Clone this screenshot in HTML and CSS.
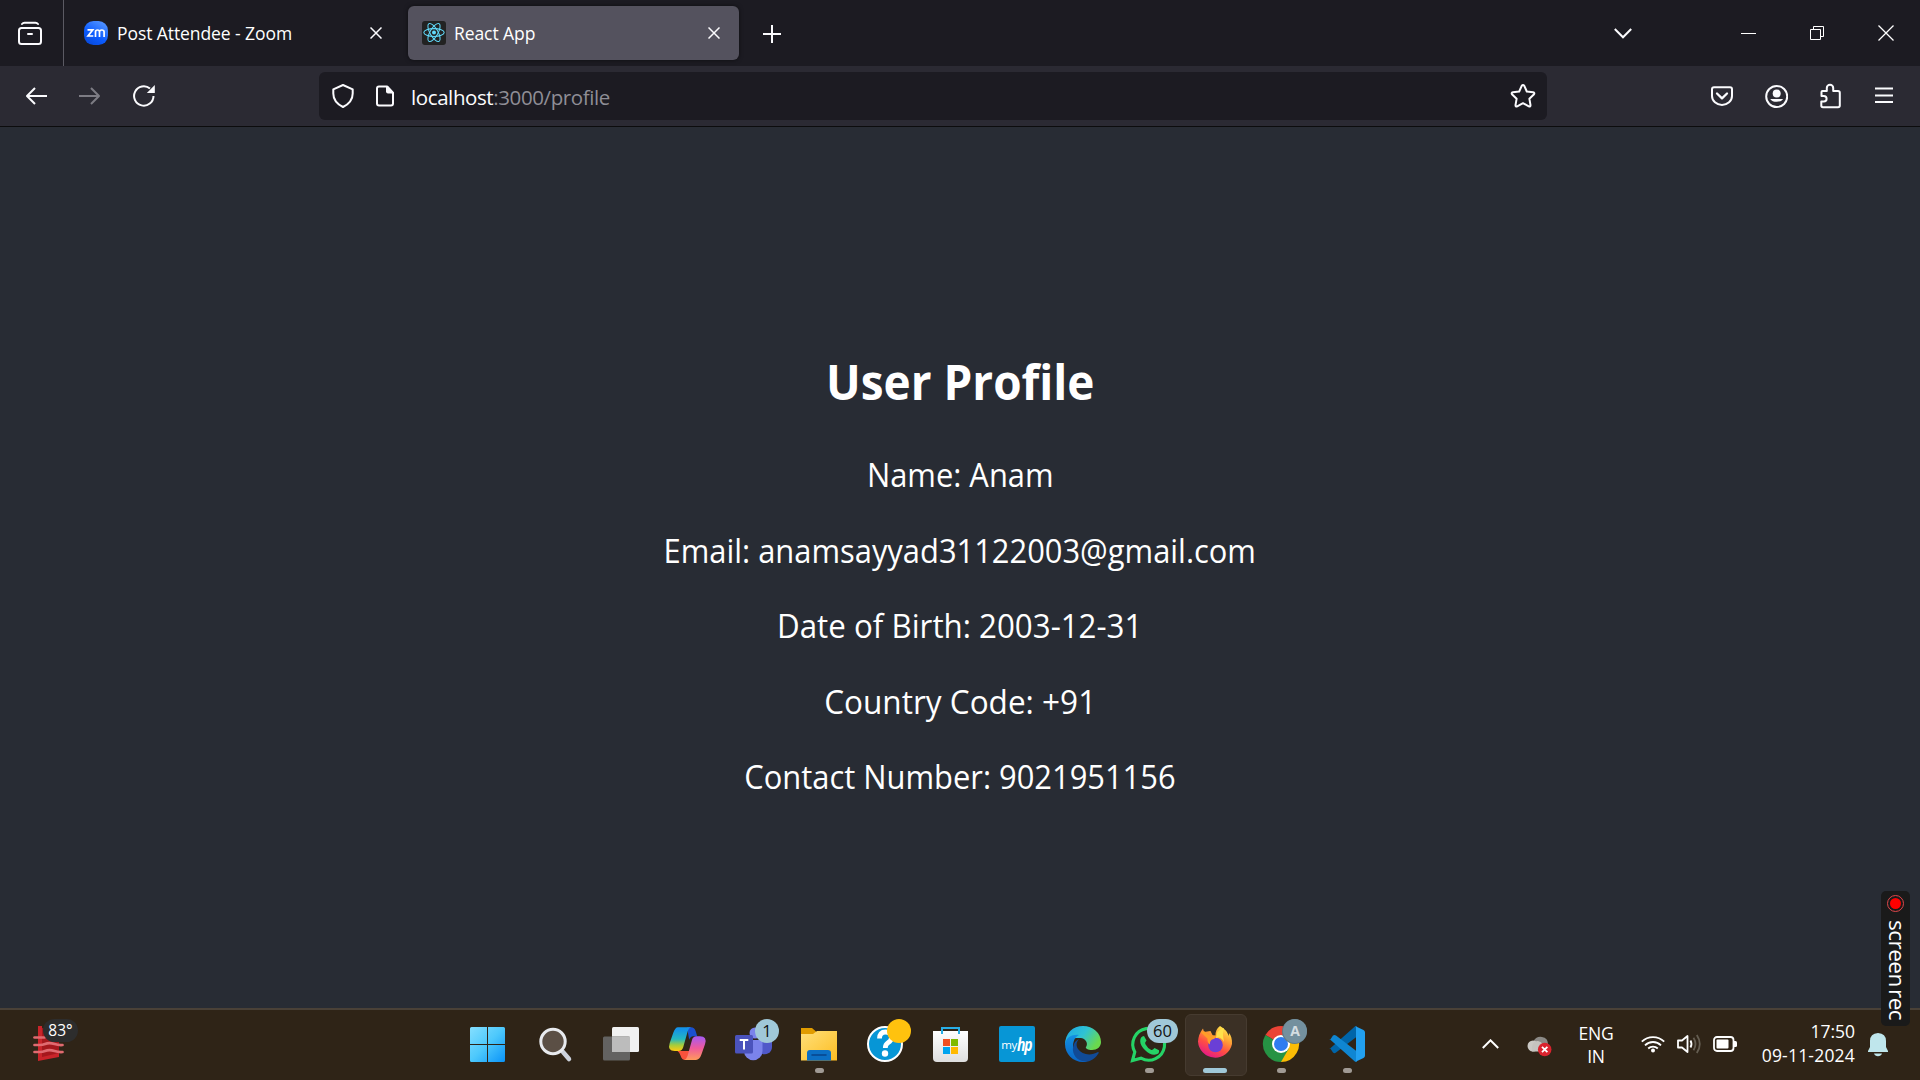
FILE: index.html
```html
<!DOCTYPE html>
<html lang="en">
<head>
<meta charset="utf-8">
<title>React App</title>
<link rel="stylesheet" href="styles.css">
</head>
<body>
<div class="tabbar">
  <svg class="archive" width="63" height="66" viewBox="0 0 63 66" fill="none" stroke="#fbfbfe" stroke-width="2" stroke-linecap="round"><path d="M22 24q1-1.300 2.500-1.300h11q1.500 0 2.500 1.300"/><rect x="19" y="28" width="22" height="16" rx="2.500"/><path d="M28 34h4"/></svg>
  <div class="tab tab-idle">
    <svg width="24" height="24" viewBox="0 0 24 24"><defs><linearGradient id="zm" x1="0" y1="1" x2=".6" y2="0"><stop offset="0" stop-color="#0845d0"/><stop offset=".5" stop-color="#0b5cff"/><stop offset="1" stop-color="#4a8dff"/></linearGradient></defs><rect width="24" height="24" rx="9.500" fill="url(#zm)"/><path d="M3.500 8.800h5.300L4 15h5.300M11.500 16V11q0-2 2-2t2 2v5M15.500 11q0-2 2.300-2t2.300 2v5" fill="none" stroke="#fff" stroke-width="1.700"/></svg>
    <span class="label label-zoom">Post Attendee - Zoom</span>
    <svg class="close" width="12" height="12" viewBox="0 0 12 12"><path d="M.5.5l11 11M11.500.5l-11 11" stroke="#fbfbfe" stroke-width="1.500"/></svg>
  </div>
  <div class="tab tab-active">
    <svg width="24" height="24" viewBox="0 0 24 24" fill="none" stroke="#61dafb" stroke-width="1.050"><rect width="24" height="24" rx="3" fill="#222" stroke="none"/><ellipse cx="12" cy="11.500" rx="10.200" ry="3.900"/><ellipse cx="12" cy="11.500" rx="10.200" ry="3.900" transform="rotate(60 12 11.500)"/><ellipse cx="12" cy="11.500" rx="10.200" ry="3.900" transform="rotate(120 12 11.500)"/><circle cx="12" cy="11.500" r="2" fill="#61dafb" stroke="none"/></svg>
    <span class="label label-react">React App</span>
    <svg class="close" width="12" height="12" viewBox="0 0 12 12"><path d="M.5.5l11 11M11.500.5l-11 11" stroke="#fbfbfe" stroke-width="1.500"/></svg>
  </div>
  <svg class="newtab" width="18" height="18" viewBox="0 0 18 18"><path d="M0 9h18M9 0v18" stroke="#fbfbfe" stroke-width="2"/></svg>
  <div class="window-controls">
    <svg width="18" height="11" viewBox="0 0 18 11"><path d="M.8 1L9 9.300 17.200 1" fill="none" stroke="#fbfbfe" stroke-width="2"/></svg>
    <svg class="min" width="15" height="3" viewBox="0 0 15 3"><path d="M0 1h15v1H0z" fill="#fff"/></svg>
    <svg class="restore" width="14" height="14" viewBox="0 0 14 14" fill="none" stroke="#fff"><path d="M.5 3.500h10v10H.5zM3.500 3V.5h10v10H11"/></svg>
    <svg width="16" height="16" viewBox="0 0 16 16"><path d="M.5.500l15 15M15.500.500l-15 15" stroke="#fff" stroke-width="1.300"/></svg>
  </div>
</div>

<div class="toolbar">
  <div class="nav">
    <svg width="22" height="22" viewBox="0 0 22 22" fill="none" stroke="#fbfbfe" stroke-width="2"><path d="M22 11H2M10 3L2 11l8 8" stroke-linejoin="round"/></svg>
    <svg width="22" height="22" viewBox="0 0 22 22" fill="none" stroke="#7d7c84" stroke-width="2"><path d="M0 11h20M12 3l8 8-8 8" stroke-linejoin="round"/></svg>
    <svg class="reload" width="24" height="24" viewBox="0 0 24 24" fill="none" stroke="#fbfbfe" stroke-width="2"><path d="M21.500 12A9.700 9.700 0 1 1 18 4.500"/><path d="M22.800 1v8h-8z" fill="#fbfbfe" stroke="none"/></svg>
  </div>
  <div class="urlbar">
    <svg width="24" height="26" viewBox="0 0 24 26" fill="none" stroke="#fbfbfe" stroke-width="2" stroke-linejoin="round"><path d="M12 2l9.700 4.300v4.200c0 6-3.700 10.500-9.700 13.500-6-3-9.700-7.500-9.700-13.500V6.300z"/></svg>
    <svg class="doc" width="20" height="24" viewBox="0 0 20 24"><path d="M4 2.500h8L18 9v10.500q0 2-2 2H4q-2 0-2-2v-15q0-2 2-2z" fill="none" stroke="#fbfbfe" stroke-width="2"/><path d="M11 2h2l5.500 6v1.500H13q-2 0-2-2z" fill="#fbfbfe"/></svg>
    <span class="url"><b>localhost</b>:3000/profile</span>
    <svg class="star" width="26" height="26" viewBox="0 0 26 26" fill="none" stroke="#fbfbfe" stroke-width="2" stroke-linejoin="round"><path d="M11.700 2.800q1.300-1.800 2.600 0l2.500 5.700 6.300.8q2 .6.700 2.200l-4.400 4.300 1.100 6.400q0 1.700-1.700 1.100L13 20.200l-5.800 3.100q-1.700.6-1.700-1.100l1.100-6.400-4.400-4.300q-1.300-1.600.7-2.200l6.300-.8z"/></svg>
  </div>
  <div class="actions">
    <svg width="24" height="24" viewBox="0 0 24 24" fill="none" stroke="#fbfbfe" stroke-width="2" stroke-linejoin="round"><path d="M4 3.300h16q2 0 2 2V12a10 9 0 0 1-20 0V5.300q0-2 2-2z"/><path d="M7 9.500l5 4.800 5-4.800" stroke-width="2.300" stroke-linecap="round"/></svg>
    <svg width="24" height="24" viewBox="0 0 24 24"><circle cx="12.700" cy="12.500" r="10.500" fill="none" stroke="#fbfbfe" stroke-width="2"/><circle cx="12.700" cy="9.500" r="4" fill="#fbfbfe"/><path d="M6.200 15h13a7.200 5 0 0 1-13 0z" fill="#fbfbfe"/></svg>
    <svg width="24" height="26" viewBox="0 0 24 26" fill="none" stroke="#fbfbfe" stroke-width="2" stroke-linejoin="round"><path d="M3.500 13V9q0-1 1-1h4.300V5a3.200 3.200 0 0 1 6.400 0v3H20q1.800 0 1.800 1.800v12.700q0 1.800-1.800 1.800H5q-1.700 0-1.700-1.700v-4h2.500a2.800 2.800 0 0 0 0-5.600z"/></svg>
    <svg width="24" height="24" viewBox="0 0 24 24"><path d="M3 4.500h18M3 11.500h18M3 18h18" stroke="#fbfbfe" stroke-width="2"/></svg>
  </div>
</div>

<main class="page">
  <h2 class="title">User Profile</h2>
  <p class="line l-name">Name: Anam</p>
  <p class="line l-email">Email: anamsayyad31122003@gmail.com</p>
  <p class="line l-dob">Date of Birth: 2003-12-31</p>
  <p class="line l-country">Country Code: +91</p>
  <p class="line l-contact">Contact Number: 9021951156</p>
</main>

<footer class="taskbar">
  <div class="weather">
    <svg width="32" height="37" viewBox="0 0 32 37"><path d="M6 2l20 6v23L6 35z" fill="#a5181d"/><path d="M5 1h4v31l17-4v4L5 36z" fill="#c9242a"/><g fill="none" stroke="#e06a70" stroke-width="2.700" stroke-linecap="round"><path d="M1.500 12.500h10"/><path d="M1.500 20h5c6 0 5-1.800 10-1.800s6 2.300 13 1.800"/><path d="M1.500 27h5c6 0 5-1.800 10-1.800s6 2.300 13 1.800"/></g></svg>
    <span class="temp">83°</span>
  </div>
  <div class="apps">
    <div class="app"><svg width="66" height="70" viewBox="0 0 66 70"><defs><linearGradient id="win" x1="0" y1="0" x2="1" y2="1"><stop offset="0" stop-color="#85dfff"/><stop offset=".5" stop-color="#4cc8fc"/><stop offset="1" stop-color="#0a93f8"/></linearGradient></defs><path d="M17.500 17h15.500v17H16V18.500Q16 17 17.500 17zM34 17h15.500q1.500 0 1.500 1.500V34H34zM16 35h17v17H17.500Q16 52 16 50.500zM34 35h17v15.500q0 1.500-1.500 1.500H34z" fill="url(#win)"/></svg></div>
    <div class="app"><svg width="66" height="70" viewBox="0 0 66 70"><path d="M43 42l6 7" stroke="#ccd2dc" stroke-width="4.500" stroke-linecap="round"/><circle cx="33" cy="31.500" r="12.200" fill="#5b4f45" stroke="#e8eaee" stroke-width="3"/></svg></div>
    <div class="app"><svg width="66" height="70" viewBox="0 0 66 70"><rect x="26" y="17" width="27" height="25" rx="1.500" fill="#f1f1f1"/><rect x="17" y="26.500" width="27" height="24" rx="1.500" fill="#636261"/><path d="M26 26.500h18V42H26z" fill="#bcbcbc"/></svg></div>
    <div class="app"><svg width="66" height="70" viewBox="0 0 66 70"><defs><linearGradient id="cpa" x1="0" y1="0" x2="0" y2="1"><stop offset=".1" stop-color="#1493e8"/><stop offset=".5" stop-color="#25b8c0"/><stop offset=".75" stop-color="#a5cc3c"/><stop offset="1" stop-color="#ffca10"/></linearGradient><linearGradient id="cpb" x1="0" y1="0" x2="0" y2="1"><stop offset="0" stop-color="#a45af4"/><stop offset=".5" stop-color="#ef5a9c"/><stop offset="1" stop-color="#ff9a5a"/></linearGradient></defs><path d="M35 17.300h4q3.500 0 4.700 4l1.500 5h-4q-3 0-4 3.500z" fill="#1a50cf"/><path d="M27 41l-1.500 0q2 1 3 4.500 1.300 4.500 5 4.500h3l4-9z" fill="#f8523c"/><path d="M26 17.300h13q-2.300.7-3.300 4l-4.500 16q-1 3.700-4.500 3.700h-4q-7.500 0-5-8l3.500-10q2-5.700 4.800-5.700z" fill="url(#cpa)"/><path d="M44 50H32q2.500-.700 3.500-4l4.500-16q1-3.700 4.500-3.700h3.500q7.500 0 5 8l-3.500 10Q47.500 50 44 50z" fill="url(#cpb)"/></svg></div>
    <div class="app"><svg width="66" height="70" viewBox="0 0 66 70"><circle cx="37" cy="23" r="5.500" fill="#7b83eb"/><path d="M43 30h11v7a7.500 7.500 0 0 1-11 6.500z" fill="#5059c9"/><path d="M26 30h18.500v11a9.200 9.200 0 0 1-18.500 0z" fill="#7b83eb"/><rect x="17" y="25" width="18" height="18.500" rx="1.500" fill="#4b53bc"/><path d="M21.700 30h8.600M26 30v9.500" stroke="#fff" stroke-width="2"/></svg><span class="badge count-one">1</span></div>
    <div class="app"><svg width="66" height="70" viewBox="0 0 66 70"><defs><linearGradient id="fold" x1="0" y1="0" x2="1" y2="1"><stop offset="0" stop-color="#ffe07a"/><stop offset="1" stop-color="#fdbd22"/></linearGradient></defs><path d="M17 18h11l4 3.500V28H17z" fill="#e19c00"/><path d="M17 24h12l4-3h20v29.500H17z" fill="url(#fold)"/><path d="M23 50.500V43q0-3 3-3h18q3 0 3 3v7.500z" fill="#0c6fc4"/><path d="M28 45h14" stroke="#07448a" stroke-width="1.500" stroke-linecap="round"/></svg><i class="dot"></i></div>
    <div class="app"><svg width="66" height="70" viewBox="0 0 66 70"><circle cx="35" cy="34" r="17" fill="#0796d6" stroke="#fff" stroke-width="2"/><path d="M29.500 28.500q0-6.500 6-6.500t6 5.500q0 3-3.500 5.300-2.700 1.800-2.700 5.200" fill="none" stroke="#fff" stroke-width="4.800"/><circle cx="35" cy="43.500" r="3.200" fill="#fff"/><circle cx="49" cy="21" r="12" fill="#ffc20e"/></svg></div>
    <div class="app"><svg width="66" height="70" viewBox="0 0 66 70"><defs><linearGradient id="bag" x1="0" y1="0" x2="0" y2="1"><stop offset="0" stop-color="#fff"/><stop offset="1" stop-color="#dedede"/></linearGradient></defs><path d="M17 21h35v27q0 4-4 4H21q-4 0-4-4z" fill="url(#bag)"/><path d="M26 24v-6h17v6" fill="none" stroke="#28aee6" stroke-width="2"/><path d="M27 29h7v7h-7z" fill="#f25022"/><path d="M35 29h7v7h-7z" fill="#7fba00"/><path d="M27 37h7v7h-7z" fill="#00a4ef"/><path d="M35 37h7v7h-7z" fill="#ffb900"/></svg></div>
    <div class="app hp"><span class="hp-box"><span>my</span><b>hp</b></span></div>
    <div class="app"><svg width="66" height="70" viewBox="0 0 66 70"><defs><linearGradient id="ed1" x1="0" y1="0" x2="1" y2=".5"><stop offset="0" stop-color="#1ba5e8"/><stop offset=".55" stop-color="#2fc3d3"/><stop offset="1" stop-color="#6ad94d"/></linearGradient><linearGradient id="ed2" x1="0" y1="0" x2="0" y2="1"><stop offset="0" stop-color="#1390e2"/><stop offset="1" stop-color="#0a64c4"/></linearGradient></defs><path d="M17 35C17 23 25 16 35 16s18 7 18 16c0 5-4 8-9 8-4 0-7-1.500-6-3 2-2.500 1-8-5-9-6-.5-14 1-16 7z" fill="url(#ed1)"/><path d="M17 34c1-7 8-10 14-9-5 2-6 8-6 12 1 8 7 14 15 14.500Q37 52 35 52c-10 0-18-8-18-18z" fill="url(#ed2)"/><path d="M31 29c-3 3-3 7-1 10 4 6 13 7 20 3 1 0 1 1 0 2-4 6-9 8-13 7.500-8-.5-13-7-12-14 .5-4 2.500-7 6-8.500z" fill="#114a96"/></svg></div>
    <div class="app"><svg width="66" height="70" viewBox="0 0 66 70"><path d="M18.500 50.500l2.300-8.500a15.900 15.900 0 1 1 6.200 6.200z" fill="none" stroke="#25d366" stroke-width="3.100"/><path d="M30 26l2.500 4.500q-2 2.200-1.200 3.500 2 4 6 6 1.200.5 3.200-2l4.500 2.300q1 4-4.800 4.500c-6 0-14-8-14-13.500q0-5 3.800-5.300z" fill="#25d366"/></svg><span class="badge count-sixty">60</span><i class="dot"></i></div>
    <div class="app app-active"><svg width="66" height="70" viewBox="0 0 66 70"><defs><linearGradient id="ff" x1=".85" y1="0" x2=".3" y2="1"><stop offset="0" stop-color="#fff44f"/><stop offset=".35" stop-color="#ffa436"/><stop offset=".65" stop-color="#ff4f42"/><stop offset="1" stop-color="#e3168c"/></linearGradient></defs><path d="M24 22l-1-3.500q-4.500 5.500-5 13A17.200 17.200 0 0 0 52 34c.3-5-1-8.500-3-11l-.3 3q-1.700-6-8.700-10-5 3.500-4.500 10H33q-2-4-2.500-5z" fill="url(#ff)"/><circle cx="35.500" cy="35" r="7.300" fill="#6a3fd6"/><path d="M20.500 22l3.500-1 5 4 8 .5q-1 3-5 4-2.500 1.500-2 5-3-2-2.500-6z" fill="#ff9d28"/><path d="M36 28q5-2 8 4-2-10 0-14-8 2-8 10z" fill="#ffe14a"/></svg><i class="dot wide"></i></div>
    <div class="app"><svg width="66" height="70" viewBox="0 0 66 70"><path d="M35 34L19.400 25a18 18 0 0 1 31.200 0H35z" fill="#ea4335"/><path d="M35 34l15.600-9A18 18 0 0 1 35 52z" fill="#fbbc05"/><path d="M35 34l7.800 4.500L35 52A18 18 0 0 1 19.400 25z" fill="#269344"/><circle cx="35" cy="34" r="9" fill="#fff"/><circle cx="35" cy="34" r="7" fill="#2f7cf0"/><circle cx="48.500" cy="21.500" r="12.500" fill="#607a86"/></svg><span class="badge avatar">A</span><i class="dot"></i></div>
    <div class="app"><svg width="66" height="70" viewBox="0 0 66 70"><path d="M18 38l3 4.500q1.500 1.500 3 0L45 26.500V16.500q-2-.5-3 .7L17.500 39z" fill="#0065a9"/><path d="M18 30l3-4.500q1.500-1 3 0L45 41.500V51.500q-2 .5-3-.7L17.500 29z" fill="#0f86d2"/><path d="M43 16l8.500 4q1.500.8 1.500 2.500v23q0 1.700-1.500 2.500L43 52q1-.5 1-2V18q0-1.500-1-2z" fill="#22a0f0"/></svg><i class="dot"></i></div>
  </div>
  <div class="tray">
    <svg class="up" width="17" height="10" viewBox="0 0 17 10"><path d="M.8 9L8.500 1.300 16.200 9" fill="none" stroke="#fff" stroke-width="2"/></svg>
    <svg class="cloud" width="25" height="21" viewBox="0 0 25 21"><path d="M6 6q3-6 9-5t6 7l-8 3z" fill="#8c8a86"/><circle cx="6" cy="10" r="5.500" fill="#cbc9c5"/><path d="M5 15.500q-1-11 6-10.500 6 1 7 10.500z" fill="#c5c3bf"/><circle cx="17.700" cy="13.500" r="6.800" fill="#d9232e"/><path d="M15 10.800l5.400 5.400M20.400 10.800L15 16.200" stroke="#fff" stroke-width="1.800"/></svg>
    <div class="lang"><span>ENG</span><span>IN</span></div>
    <svg class="wifi" width="24" height="18" viewBox="0 0 24 18" fill="none" stroke="#fff" stroke-width="1.800"><path d="M.8 6.700a15.800 15.800 0 0 1 22.400 0M4 10.300a11.400 11.400 0 0 1 16 0M7.200 13.500a6.900 6.900 0 0 1 9.600 0"/><circle cx="12" cy="15.500" r="2" fill="#fff" stroke="none"/></svg>
    <svg class="speaker" width="25" height="20" viewBox="0 0 25 20" fill="none" stroke="#fff" stroke-width="1.800"><path d="M1 6.500h4L10.500 2v16L5 13.500H1z" stroke-linejoin="round"/><path d="M13.500 6.500q2 3.500 0 7"/><path d="M16.500 3.800q4 6.200 0 12.400M19.800 1q6 9 0 18" stroke="#655e52"/></svg>
    <svg class="battery" width="24" height="16" viewBox="0 0 24 16"><rect x="1" y="1" width="19.500" height="14" rx="3" fill="none" stroke="#fff" stroke-width="1.800"/><rect x="3.500" y="3.500" width="12" height="9" rx="1" fill="#fff"/><path d="M21 5h1.500q1.500 0 1.500 1.500v3q0 1.500-1.500 1.500H21z" fill="#fff"/></svg>
    <div class="clock"><span>17:50</span><span class="date">09-11-2024</span></div>
    <svg class="bell" width="20" height="24" viewBox="0 0 20 24" fill="#bfe6ec"><path d="M10 0q8 .5 8 8v6l2 4v1H0v-1l2-4V8Q2 .5 10 0zM6 20.500h8q-1 2.800-4 2.800t-4-2.800z"/></svg>
  </div>
</footer>

<div class="recorder">
  <svg width="17" height="17" viewBox="0 0 17 17"><circle cx="8.500" cy="8.500" r="8" fill="none" stroke="#e0474a"/><circle cx="8.500" cy="8.500" r="5.500" fill="#f00"/></svg>
  <span class="rec-text">screen<span class="rec-tail">rec</span></span>
</div>
</body>
</html>
```
FILE: styles.css
```css
* { box-sizing: border-box; }
body {
  margin: 0;
  width: 1920px;
  height: 1080px;
  overflow: hidden;
  display: flex;
  flex-direction: column;
  background: #282c34;
  color: #fff;
  font-family: "Open Sans", "Noto Sans", sans-serif;
}
svg { display: block; flex: none; }

/* Tab strip */
.tabbar { height: 66px; display: flex; align-items: center; background: #1c1b22; flex: none; }
.archive { border-right: 1px solid #5b5a63; width: 64px; }
.tab { display: flex; align-items: center; height: 54px; border-radius: 6px; }
.tab-idle { width: 324px; margin: 0 10px; padding: 0 16px 0 10px; }
.tab-active { width: 331px; background: #54525e; padding: 0 19px 0 14px; box-shadow: 0 0 4px #0008; }
.label { font-size: 17.5px; line-height: 24px; white-space: nowrap; }
.label-zoom { margin-left: 9px; letter-spacing: -.08px; }
.label-react { margin-left: 8px; letter-spacing: -.08px; }
.close { margin-left: auto; }
.newtab { margin: 2px 0 0 24px; }
.window-controls { margin-left: auto; display: flex; align-items: center; padding-right: 26px; }
.min { margin: 0 54px 0 109px; }
.restore { margin-right: 54px; }

/* Navigation toolbar */
.toolbar { height: 61px; display: flex; align-items: center; background: #2b2a33; border-bottom: 1px solid #0c0c0d; flex: none; }
.nav { display: flex; align-items: center; gap: 32px; width: 319px; padding-left: 25px; }
.reload { margin-left: -1px; }
.urlbar { width: 1228px; height: 48px; border-radius: 6px; background: #1c1b22; display: flex; align-items: center; padding: 0 11px 0 12px; }
.doc { margin-left: 20px; }
.url { margin: 2px 0 0 16px; font-size: 20.5px; line-height: 28px; color: #8f8e96; letter-spacing: -.4px; }
.url b { font-weight: 400; color: #fbfbfe; }
.star { margin-left: auto; }
.actions { display: flex; align-items: center; gap: 30px; margin-left: 163px; }

/* Profile page */
.page { height: 881px; flex: none; display: flex; flex-direction: column; align-items: center; padding-top: 221px; }
.title { margin: 0 0 39px; font-size: 49px; line-height: 66px; font-weight: 700; white-space: nowrap; transform: scaleX(.937); }
.line { margin: 0 0 31.6px; font-size: 32.5px; line-height: 44px; white-space: nowrap; transform: scaleX(.95); }
.l-dob { transform: scaleX(.963); }
.l-country { transform: scaleX(.97); }

/* Taskbar */
.taskbar { height: 72px; flex: none; display: flex; background: #2f2417; border-top: 2px solid #4a4137; }
.weather { width: 454px; padding: 15px 0 0 33px; position: relative; }
.temp { position: absolute; left: 43px; top: 9px; width: 35px; height: 23px; border-radius: 12px; background: #2d2d2d; font-size: 15.5px; line-height: 23px; text-align: center; }
.apps { display: grid; grid-template-columns: repeat(14, 66px); }
.app { position: relative; height: 70px; }
.app-active::before { content: ""; position: absolute; left: 5px; top: 4px; width: 60px; height: 60px; border-radius: 6px; background: #3b3025; border: 1px solid #463b30; }
.app-active svg { position: relative; }
.dot { position: absolute; left: 31px; top: 58px; width: 9px; height: 5px; border-radius: 3px; background: #a09a94; }
.dot.wide { left: 23px; width: 24px; background: #a0c8d8; }
.badge { position: absolute; top: 9px; height: 24px; border-radius: 12px; line-height: 24px; text-align: center; color: #111; background: #a0c8d8; font-size: 16.5px; }
.count-one { left: 37px; width: 24px; }
.count-sixty { left: 33px; width: 31px; }
.avatar { left: 37px; width: 24px; background: #74909e; color: #d5dde1; font-size: 14px; font-weight: 700; }
.hp { padding: 16px 0 0 17px; }
.hp-box { display: flex; align-items: center; justify-content: center; width: 36px; height: 36px; border-radius: 2px; background: #0796d6; font-size: 11.5px; letter-spacing: -.5px; }
.hp-box b { font: italic 700 17px "Open Sans", sans-serif; letter-spacing: -1.5px; transform: scaleX(.82); transform-origin: left; width: 16px; }
.tray { display: flex; align-items: center; padding: 0 0 2px 104px; line-height: 24px; font-size: 17.5px; }
.cloud { margin: 4px 0 0 28px; }
.lang { display: flex; flex-direction: column; width: 44px; margin: 2px 0 0 22px; text-align: center; line-height: 23px; letter-spacing: -.2px; }
.wifi { margin-left: 23px; }
.speaker { margin-left: 12px; }
.battery { margin-left: 11px; }
.clock { display: flex; flex-direction: column; width: 118px; text-align: right; letter-spacing: 0; white-space: nowrap; line-height: 24px; margin-bottom: 2px; }
.date { letter-spacing: .2px; }
.bell { margin-left: 13px; margin-top: 2px; }

/* Floating recorder handle */
.recorder { position: absolute; left: 1881px; top: 891px; width: 29px; height: 135px; border-radius: 5px; background: #1a1a1a; padding-top: 4px; display: flex; flex-direction: column; align-items: center; }
.rec-text { writing-mode: vertical-rl; margin: 8px 0 0 3px; font-size: 22.5px; font-weight: 500; line-height: 28px; letter-spacing: -.5px; white-space: nowrap; }
.rec-tail { margin-top: 2px; display: inline-block; }
```
